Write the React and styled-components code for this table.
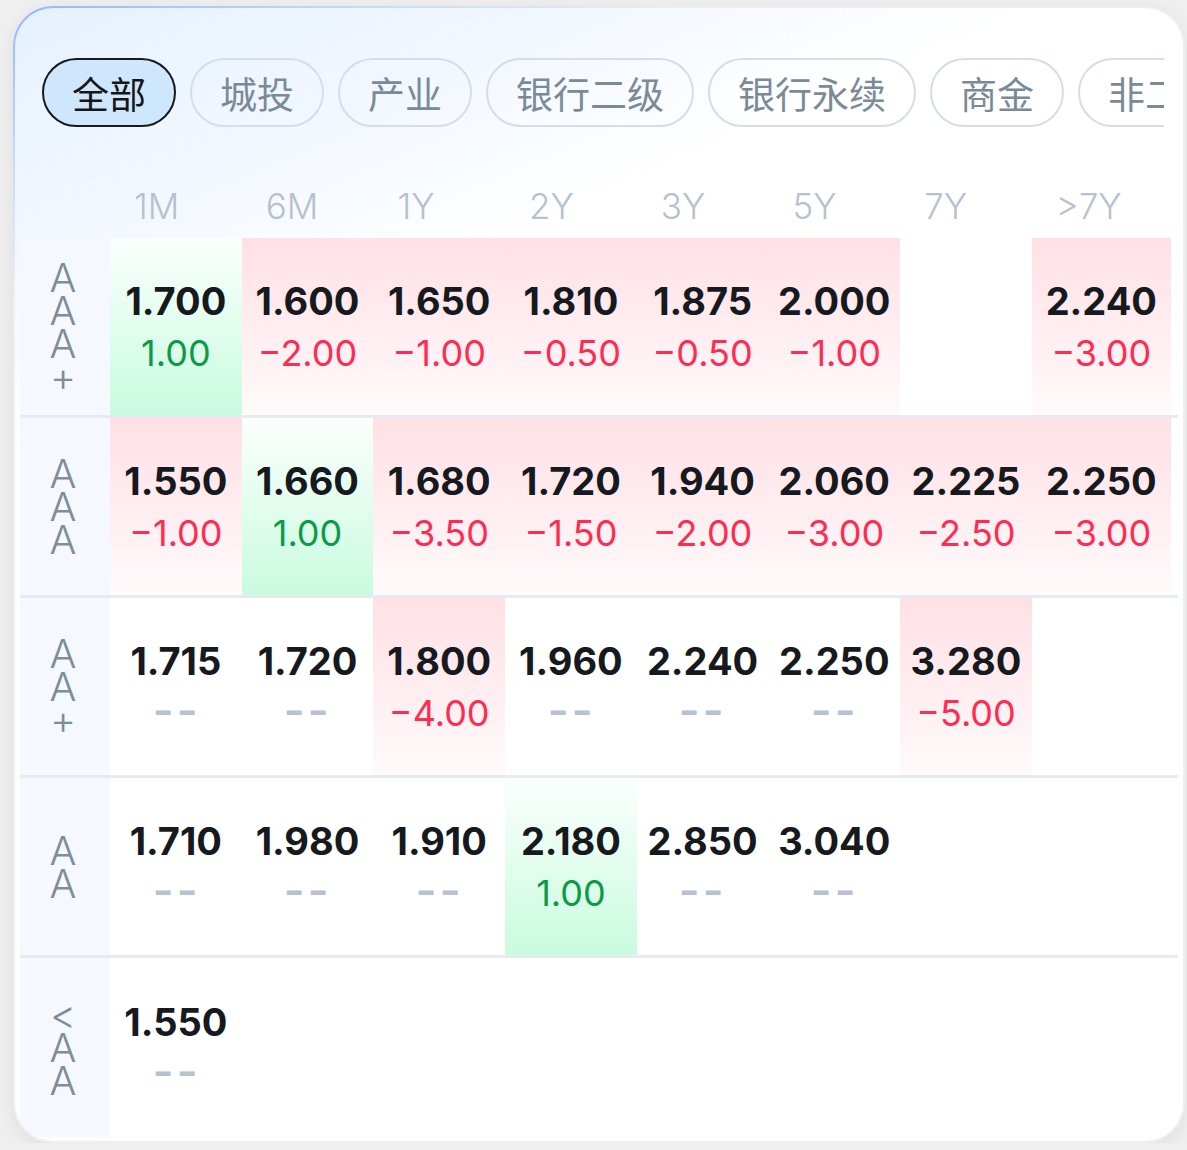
import React from "react";
import styled, { createGlobalStyle } from "styled-components";

const GlobalStyle = createGlobalStyle`
  body {
    margin: 0;
    background: #efefef;
    font-family: Inter, "Noto Sans", sans-serif;
  }
`;

const TABS = ["全部", "城投", "产业", "银行二级", "银行永续", "商金", "非二永"];
const TERMS = ["1M", "6M", "1Y", "2Y", "3Y", "5Y", "7Y", ">7Y"];

// each cell: [yield, change] — change null means "--", whole cell null means empty
const ROWS = [
  {
    label: "AAA+",
    cells: [
      ["1.700", 1],
      ["1.600", -2],
      ["1.650", -1],
      ["1.810", -0.5],
      ["1.875", -0.5],
      ["2.000", -1],
      null,
      ["2.240", -3],
    ],
  },
  {
    label: "AAA",
    cells: [
      ["1.550", -1],
      ["1.660", 1],
      ["1.680", -3.5],
      ["1.720", -1.5],
      ["1.940", -2],
      ["2.060", -3],
      ["2.225", -2.5],
      ["2.250", -3],
    ],
  },
  {
    label: "AA+",
    cells: [
      ["1.715", null],
      ["1.720", null],
      ["1.800", -4],
      ["1.960", null],
      ["2.240", null],
      ["2.250", null],
      ["3.280", -5],
      null,
    ],
  },
  {
    label: "AA",
    cells: [
      ["1.710", null],
      ["1.980", null],
      ["1.910", null],
      ["2.180", 1],
      ["2.850", null],
      ["3.040", null],
      null,
      null,
    ],
  },
  {
    label: "<AA",
    cells: [["1.550", null], null, null, null, null, null, null, null],
  },
];

function trendOf(change) {
  if (change === null || change === undefined) return "flat";
  return change > 0 ? "up" : "down";
}

function formatChange(change) {
  if (change > 0) return change.toFixed(2);
  return "\u2212" + Math.abs(change).toFixed(2);
}

export default function App() {
  return (
    <>
      <GlobalStyle />
      <Card>
        <TabStrip>
          {TABS.map((t, i) => (
            <Tab key={t} active={i === 0}>
              {t}
            </Tab>
          ))}
        </TabStrip>

        <HeaderRow>
          <span />
          {TERMS.map((t) => (
            <Term key={t}>{t}</Term>
          ))}
        </HeaderRow>

        {ROWS.map((row, ri) => (
          <Row key={row.label} last={ri === ROWS.length - 1}>
            <RatingCell>
              <RatingText>{row.label}</RatingText>
            </RatingCell>
            {row.cells.map((cell, ci) => {
              if (!cell) return <Cell key={ci} />;
              const [value, change] = cell;
              const trend = trendOf(change);
              return (
                <Cell key={ci} trend={trend}>
                  <Value>{value}</Value>
                  {trend === "flat" ? (
                    <Dash>--</Dash>
                  ) : (
                    <Change trend={trend}>{formatChange(change)}</Change>
                  )}
                </Cell>
              );
            })}
          </Row>
        ))}
      </Card>
    </>
  );
}

const Card = styled.div`
  box-sizing: border-box;
  width: 1172px;
  height: 1137px;
  margin: 6px 0 0 13px;
  padding: 50px 5px 4px 5px;
  border: 2px solid transparent;
  border-radius: 40px;
  overflow: hidden;
  background: linear-gradient(157deg, #e6f1ff 0%, #f1f7ff 14%, #ffffff 27%)
      padding-box,
    linear-gradient(157deg, #8fb8ff 0%, #c3d9ff 9%, rgba(255, 255, 255, 0) 18%)
      border-box;
  box-shadow: 0 4px 18px rgba(0, 0, 0, 0.07);
`;

const TabStrip = styled.div`
  display: flex;
  gap: 14px;
  height: 69px;
  margin: 0 14px 0 22px;
  overflow: hidden;
`;

const Tab = styled.div`
  flex-shrink: 0;
  box-sizing: border-box;
  height: 69px;
  padding: 0 28px;
  display: flex;
  align-items: center;
  border-radius: 35px;
  border: 2px solid ${(p) => (p.active ? "#17191c" : "#d6dde5")};
  background: ${(p) => (p.active ? "#cfe7fd" : "transparent")};
  color: ${(p) => (p.active ? "#141619" : "#7a8a97")};
  font-family: "Noto Sans CJK SC", sans-serif;
  font-size: 37px;
  white-space: nowrap;
`;

const grid = `
  display: grid;
  grid-template-columns: 90px repeat(7, 131.7px) 139px;
`;

const HeaderRow = styled.div`
  ${grid}
  height: 111px;
  align-items: end;
  padding-bottom: 14px;
  box-sizing: border-box;
`;

const Term = styled.div`
  padding-left: 24px;
  font-size: 35px;
  font-weight: 300;
  line-height: 36px;
  color: #b6c1cf;
`;

const Row = styled.div`
  ${grid}
  height: ${(p) => (p.last ? "179px" : "180px")};
  box-sizing: border-box;
  border-bottom: ${(p) => (p.last ? "none" : "3px solid #e6ebf0")};
  background: #ffffff;
`;

const RatingCell = styled.div`
  display: flex;
  align-items: center;
  justify-content: center;
  padding-right: 4px;
  background: #f5f9ff;
`;

const RatingText = styled.div`
  width: 30px;
  word-break: break-all;
  text-align: center;
  font-size: 40px;
  font-weight: 300;
  line-height: 33px;
  color: #7d8d9b;
`;

const cellBg = {
  up: "linear-gradient(180deg, #fbfffd 0%, #c9fbdf 100%)",
  down: "linear-gradient(180deg, #ffe0e5 0%, #fffafb 100%)",
  flat: "transparent",
};

const Cell = styled.div`
  display: flex;
  flex-direction: column;
  align-items: center;
  justify-content: center;
  background: ${(p) => cellBg[p.trend] || "transparent"};
`;

const Value = styled.div`
  font-size: 38px;
  font-weight: 700;
  line-height: 52px;
  color: #16191d;
`;

const Change = styled.div`
  font-size: 36px;
  font-weight: 400;
  line-height: 52px;
  color: ${(p) => (p.trend === "up" ? "#0b9a48" : "#ff2b50")};
`;

const Dash = styled.div`
  display: inline-block;
  margin-left: -9px;
  font-family: "Liberation Mono", monospace;
  font-size: 36px;
  font-weight: 700;
  line-height: 52px;
  letter-spacing: -5px;
  transform: scaleX(1.45);
  color: #b7c2d0;
`;
